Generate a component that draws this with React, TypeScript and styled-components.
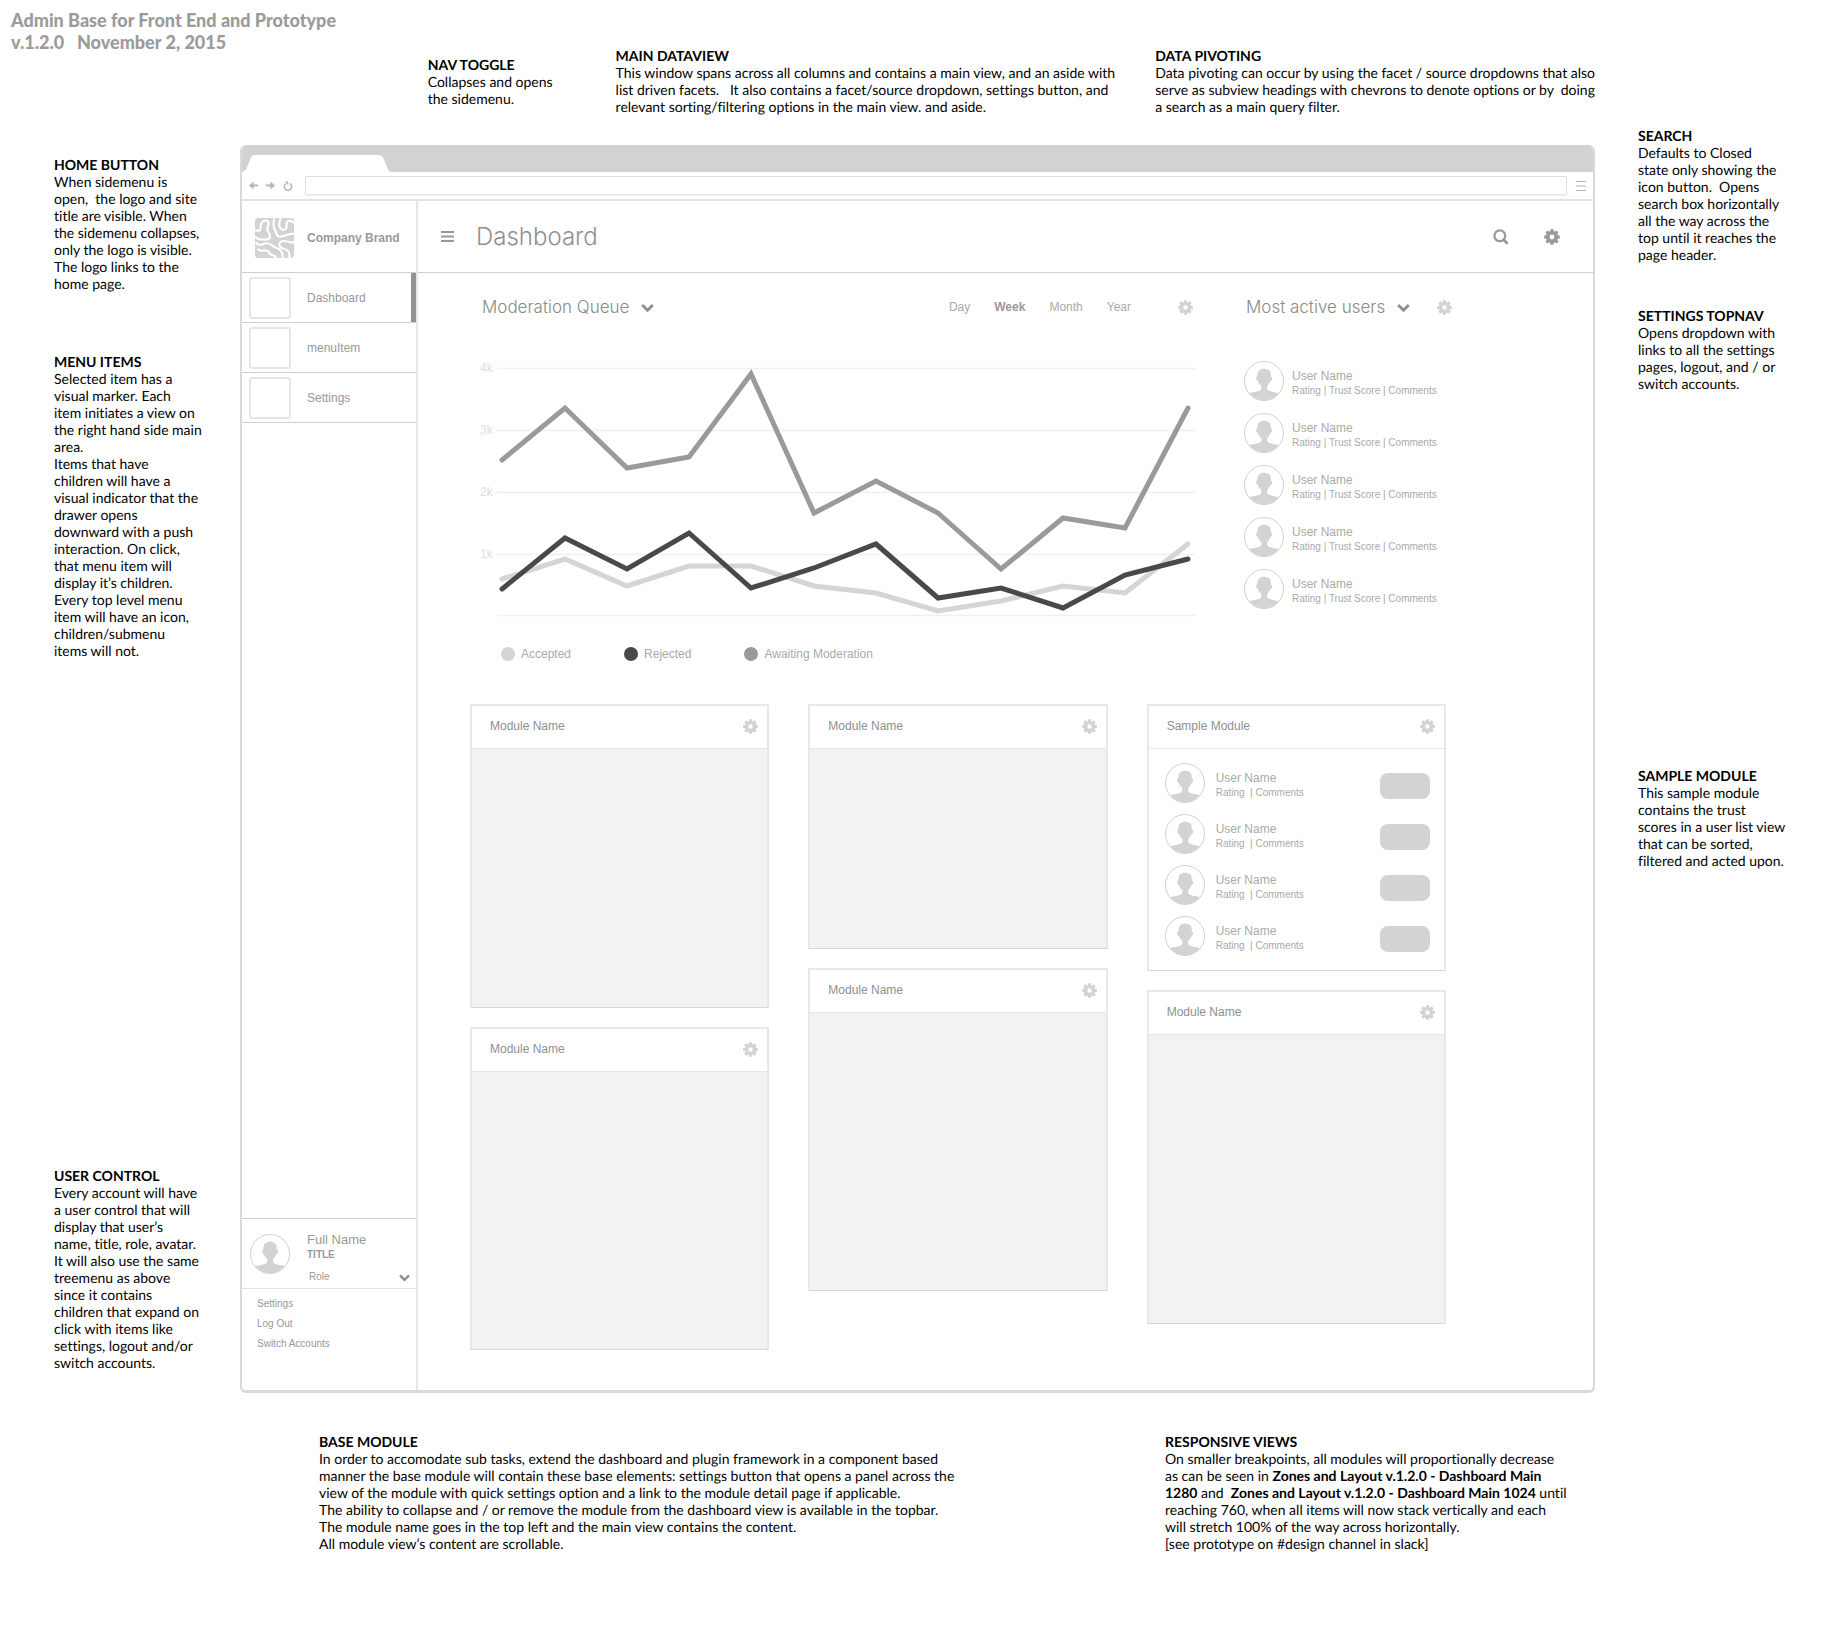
import React from "react";
import styled, { createGlobalStyle } from "styled-components";

const GlobalStyle = createGlobalStyle`
  *, *::before, *::after { box-sizing: border-box; }
  body {
    margin: 0;
    background: #fff;
    font-family: "Liberation Sans", Arial, sans-serif;
    font-size: 12px;
    color: #999;
  }
  h1, h2, h3, p, ul { margin: 0; padding: 0; }
  ul { list-style: none; }
  button, input { font: inherit; color: inherit; }
  svg { display: block; flex: none; }
`;

const Sheet = styled.div`
  display: grid;
  grid-template-columns: 240px minmax(0, 1fr) 229px;
  grid-template-rows: 145px auto auto;
`;

const TopNotes = styled.header`
  grid-column: 1 / 3;
  display: grid;
  grid-template-columns: 428fr 188fr 540fr 439fr;
`;

const SheetTitle = styled.h1`
  padding: 9px 0 0 11px;
  font: 900 18px/22px Lato, sans-serif;
  color: #9b9b9b;
  white-space: pre;
`;

const LeftRail = styled.aside`
  grid-column: 1;
  grid-row: 2;
  display: flex;
  flex-direction: column;
  gap: 60px;
  padding: 10px 0 22px 54px;

  > :last-child { margin-top: auto; }
`;

const RightRail = styled.aside`
  grid-column: 3;
  grid-row: 1 / 3;
  display: flex;
  flex-direction: column;
  gap: 43px;
  padding: 126px 0 0 43px;

  > :last-child { margin-top: 331px; }
`;

const BottomNotes = styled.footer`
  grid-column: 1 / 4;
  display: grid;
  grid-template-columns: 846fr 659fr;
  padding: 39px 0 74px 319px;
`;

const NoteBlock = styled.section<{ $top?: number }>`
  padding-top: ${(p) => p.$top ?? 0}px;
  font: 400 14px/17px Lato, sans-serif;
  font-variant-ligatures: none;
  text-rendering: geometricPrecision;
  color: #000;
  white-space: pre;
`;

const NoteTitle = styled.h2`
  padding-top: 1px;
  font: 700 14px/17px Lato, sans-serif;
`;

const Line = styled.span`
  display: block;
`;

const Note = ({ title, top, children }: { title: string; top?: number; children: React.ReactNode }) => (
  <NoteBlock $top={top}>
    <NoteTitle>{title}</NoteTitle>
    <p>{children}</p>
  </NoteBlock>
);

/* Browser window */

const Window = styled.div`
  grid-column: 2;
  grid-row: 2;
  display: flex;
  flex-direction: column;
  border: 2px solid #d8d9da;
  border-width: 0 2px 3px;
  border-radius: 6px;
  overflow: hidden;
`;

const TabStrip = styled.div`
  display: flex;
  align-items: flex-end;
  height: 27px;
  background: #d1d2d4;
`;

const AddressBar = styled.div`
  display: flex;
  align-items: center;
  height: 29px;
  padding: 0 4px 0 3px;
  border-bottom: 2px solid #e2e2e2;
`;

const ChromeButton = styled.button`
  display: grid;
  place-items: center;
  width: 17px;
  height: 20px;
  padding: 0;
  border: 0;
  background: none;
  color: #b4b5b7;
`;

const AddressInput = styled.input`
  flex: 1;
  min-width: 0;
  height: 20px;
  margin: 0 5px 0 9px;
  padding: 0 6px;
  border: 1px solid #dedede;
  border-bottom: 2px solid #ebebeb;
  border-radius: 2px;
  outline: 0;
`;

const Shell = styled.div`
  display: grid;
  grid-template-columns: 176px minmax(0, 1fr);
  flex: 1;
`;

const Sidebar = styled.nav`
  display: flex;
  flex-direction: column;
  border-right: 2px solid #e6e6e6;
`;

const Brand = styled.a`
  display: flex;
  align-items: center;
  gap: 13px;
  height: 72px;
  padding: 2px 0 0 13px;
  border-bottom: 1px solid #cfcfcf;
  font-weight: 700;
  color: #999;
  text-decoration: none;
  white-space: nowrap;
`;

const MenuLink = styled.a<{ $active?: boolean }>`
  display: flex;
  align-items: center;
  gap: 16px;
  height: 50px;
  padding-left: 7px;
  border-bottom: 1px solid #cfcfcf;
  box-shadow: ${(p) => (p.$active ? "inset -5px 0 0 #929497" : "none")};
  color: #999;
  text-decoration: none;
`;

const MenuIcon = styled.span`
  width: 42px;
  height: 42px;
  border: 2px solid #e6e6e6;
  border-radius: 3px;
`;

const UserControl = styled.div`
  margin-top: auto;
  height: 172px;
  border-top: 1px solid #cfcfcf;
`;

const Account = styled.div`
  display: flex;
  gap: 17px;
  height: 70px;
  padding: 15px 6px 0 8px;
  border-bottom: 1px solid #e0e0e0;
`;

const AccountText = styled.div`
  flex: 1;
`;

const AccountName = styled.div`
  margin-top: -2px;
  font-size: 13px;
  line-height: 15px;
`;

const AccountTitle = styled.div`
  font-size: 10px;
  font-weight: 700;
  line-height: 16px;
`;

const RoleButton = styled.button`
  display: flex;
  align-items: center;
  justify-content: space-between;
  width: 100%;
  padding: 6px 0 0 2px;
  border: 0;
  background: none;
  font-size: 10px;
  line-height: 16px;
`;

const AccountLinks = styled.ul`
  padding: 5px 0 0 15px;
`;

const AccountLink = styled.a`
  display: block;
  font-size: 10px;
  line-height: 20px;
  color: #999;
  text-decoration: none;
`;

const TopBar = styled.header`
  display: flex;
  align-items: center;
  gap: 20px;
  height: 72px;
  padding: 0 31px 0 21px;
  border-bottom: 1px solid #cfcfcf;
`;

const IconButton = styled.button`
  display: grid;
  place-items: center;
  padding: 2px;
  border: 0;
  background: none;
`;

const PageTitle = styled.h2`
  flex: 1;
  font: 300 24px/28px Inter, "Liberation Sans", sans-serif;
  color: #909090;
`;

const TopActions = styled.div`
  display: flex;
  gap: 31px;
  color: #999;
`;

const Content = styled.main`
  padding: 19px 147px 40px 52px;
`;

const Overview = styled.div`
  display: grid;
  grid-template-columns: minmax(0, 1fr) 210px;
  gap: 49px;
  margin-right: -8px;
  margin-bottom: 42px;
`;

const PanelHead = styled.div`
  display: flex;
  align-items: center;
  height: 30px;
  padding-left: 12px;
`;

const UsersHead = styled(PanelHead)`
  justify-content: space-between;
  padding-left: 2px;
`;

const SourceButton = styled.button`
  display: flex;
  align-items: center;
  gap: 12px;
  padding: 0;
  border: 0;
  background: none;
  font: 300 17px/22px Inter, "Liberation Sans", sans-serif;
  color: #8a8a8a;
  white-space: nowrap;
`;

const Ranges = styled.div`
  display: flex;
  gap: 24px;
  margin-left: auto;
  margin-right: 45px;
`;

const RangeButton = styled.button<{ $active?: boolean }>`
  padding: 0;
  border: 0;
  background: none;
  font-weight: ${(p) => (p.$active ? 700 : 400)};
  color: ${(p) => (p.$active ? "#999" : "#aaa")};
`;

const GearButton = styled(IconButton)`
  color: #d3d3d3;
`;

const ChartSvg = styled.svg`
  width: 100%;
  height: auto;
  margin-top: 38px;
`;

const AxisLabel = styled.text`
  font-size: 12px;
  fill: #dedede;
`;

const Legend = styled.ul`
  display: flex;
  gap: 53px;
  margin-top: 26px;
  padding-left: 31px;
`;

const LegendItem = styled.li<{ $color: string }>`
  display: flex;
  align-items: center;
  gap: 6px;
  line-height: 16px;
  color: #aaa;

  &::before {
    content: "";
    width: 14px;
    height: 14px;
    border-radius: 50%;
    background: ${(p) => p.$color};
  }
`;

const UserList = styled.ul<{ $gap: number }>`
  display: flex;
  flex-direction: column;
  gap: ${(p) => p.$gap}px;
`;

const ActiveUsers = styled(UserList)`
  margin-top: 39px;
`;

const UserRow = styled.li<{ $gap: number }>`
  display: flex;
  align-items: flex-start;
  gap: ${(p) => p.$gap}px;
  height: 40px;
`;

const UserText = styled.div`
  flex: 1;
  padding-top: 8px;
  color: #aaa;
  white-space: pre;
`;

const UserName = styled.div`
  line-height: 15px;
`;

const UserMeta = styled.div`
  font-size: 10px;
  line-height: 13px;
`;

const Pill = styled.button`
  width: 50px;
  height: 26px;
  margin-top: 10px;
  border: 0;
  border-radius: 8px;
  background: #d3d3d3;
`;

const Modules = styled.div`
  display: grid;
  grid-template-columns: repeat(3, minmax(0, 1fr));
  gap: 39px;
  align-items: start;
`;

const Column = styled.div`
  display: flex;
  flex-direction: column;
  gap: 19px;
`;

const ModuleBox = styled.section`
  border: 2px solid #e8e8e8;
  border-bottom: 1px solid #d6d6d6;
  border-radius: 1px;
`;

const ModuleHead = styled.header`
  display: flex;
  align-items: center;
  justify-content: space-between;
  height: 43px;
  padding: 0 7px 2px 18px;
  border-bottom: 1px solid #e6e6e6;
`;

const ModuleTitle = styled.h3`
  font-size: 12px;
  font-weight: 400;
  color: #8f8f8f;
`;

const ModuleBody = styled.div<{ $height: number }>`
  height: ${(p) => p.$height}px;
  background: #f2f2f2;
`;

const SampleBody = styled.div`
  padding: 14px 14px 14px 16px;
`;

/* Icons */

const Gear = ({ size = 15 }: { size?: number }) => (
  <svg width={size} height={size} viewBox="0 0 16 16" fill="currentColor" aria-hidden="true">
    <circle cx="8" cy="8" r="4.2" fill="none" stroke="currentColor" strokeWidth="3.6" />
    {[0, 45, 90, 135, 180, 225, 270, 315].map((a) => (
      <path key={a} d="M6.1 3.2L6.5 0.2H9.5L9.9 3.2Z" transform={`rotate(${a} 8 8)`} />
    ))}
  </svg>
);

const Chevron = ({ size = 13 }: { size?: number }) => (
  <svg width={size} height={size} viewBox="0 0 13 13" aria-hidden="true">
    <path d="M1.2 4L6.5 9.2L11.8 4" fill="none" stroke="#8e8e8e" strokeWidth="2.8" />
  </svg>
);

const Bars = ({ width, height, weight }: { width: number; height: number; weight: number }) => (
  <svg width={width} height={height} viewBox={`0 0 ${width} ${height}`} aria-hidden="true">
    <path
      d={`M0 ${weight / 2}H${width}M0 ${height / 2}H${width}M0 ${height - weight / 2}H${width}`}
      stroke="currentColor"
      strokeWidth={weight}
    />
  </svg>
);

const SearchIcon = () => (
  <svg width="16" height="16" viewBox="0 0 16 16" fill="none" stroke="currentColor" strokeWidth="2.3" aria-hidden="true">
    <circle cx="6.8" cy="6.8" r="5.4" />
    <path d="M10.8 10.8L14.6 14.8" strokeWidth="2.8" />
  </svg>
);

const Arrow = ({ flip }: { flip?: boolean }) => (
  <svg width="9" height="9" viewBox="0 0 9 9" aria-hidden="true">
    <g transform={flip ? "rotate(180 4.5 4.5)" : undefined}>
      <path d="M0 4.5L4.6 0.4V8.6Z" fill="currentColor" />
      <path d="M3 4.5H9" stroke="currentColor" strokeWidth="2.2" />
    </g>
  </svg>
);

const Reload = () => (
  <svg width="10" height="10" viewBox="0 0 10 10" fill="none" aria-hidden="true">
    <path d="M6.6 2.3A3.7 3.7 0 1 1 2.4 2.9" stroke="currentColor" strokeWidth="1.5" />
    <path d="M1.6 0.4H5.1V4Z" fill="currentColor" />
  </svg>
);

const Logo = () => (
  <svg width="39" height="40" viewBox="0 0 39 40" aria-hidden="true">
    <defs>
      <clipPath id="logo-clip">
        <rect width="39" height="40" rx="3" />
      </clipPath>
    </defs>
    <g clipPath="url(#logo-clip)" fill="none" stroke="#fff" strokeWidth="2.1">
      <rect width="39" height="40" fill="#d3d3d3" stroke="none" />
      <path d="M0 12C3.5 13.5 5 13 5.5 10C5.5 5 7.5 2.5 10.5 2.5C14 2.5 14.5 6 12.5 9.5C11 13 15.5 15 15 19C14.5 22.5 9 21.5 6 21.5C3 21.5 2 21 0 18.5" />
      <path d="M19.5 0C18 5 18 9 20 12C22 15 21 18 24 18.5C29 19.5 32 15 39 16" />
      <path d="M26 0C23.5 4 23.5 10 27 11.5C31 12.5 32 10 31.5 6.5C31.5 2.5 35 1.5 39 5" />
      <path d="M1 24C2 28 6 27 10 25.5C15 24 17 28 20.5 29.5C26 31.5 28 34 27.5 40" />
      <path d="M39 24C35 26 33 22.5 28.5 23C23 23.5 23 29 28 30.5C32 31.5 35 33 34.5 40" />
      <path d="M3 30.5C3.5 34 8 32.5 11 32.5C15 32.5 13 36 17 37C20 37.5 20.5 38.5 21 40" />
    </g>
  </svg>
);

const Avatar = () => (
  <svg width="40" height="40" viewBox="0 0 40 40" aria-hidden="true">
    <circle cx="20" cy="20" r="19.5" fill="#fff" stroke="#cfcfcf" />
    <path
      fill="#d3d3d3"
      d="M5.2 32.5C8 31 13 30.8 15.5 29.8C17.4 29 17.7 27 17 24.5C15.5 23.5 14.6 22 14.2 20.5C12.8 20.3 12 18 12.1 16.2C12.2 15.6 13 15.7 13.4 15.8C13 12 14.5 8.6 18 7.9C20 7.3 22 7.6 23 8.4C26 8.2 27.2 11.5 26.7 15.8C27.6 15.6 28.3 16 28.2 17C28 19 27.2 20.4 26 20.5C25.5 22.3 24.7 23.7 23.5 24.5C22.8 27 23.2 29 25 29.8C27.5 30.8 32 31 34.8 32.5A19.5 19.5 0 0 1 5.2 32.5Z"
    />
  </svg>
);

/* Data */

const xs = [32, 95, 157, 219, 281, 344, 406, 468, 531, 593, 655, 718];

const series = [
  { name: "Accepted", color: "#d5d5d5", ys: [219, 199, 226, 206, 206, 226, 233, 251, 241, 226, 233, 184] },
  { name: "Rejected", color: "#494949", ys: [229, 178, 209, 173, 228, 208, 184, 238, 228, 248, 215, 199] },
  { name: "Awaiting Moderation", color: "#9a9a9a", ys: [100, 48, 108, 97, 14, 153, 121, 153, 209, 158, 168, 48] },
];

const gridLines = [
  { y: 8.5, label: "4k" },
  { y: 70.5, label: "3k" },
  { y: 132.5, label: "2k" },
  { y: 194.5, label: "1k" },
  { y: 255.5, label: "" },
];

const Chart = () => (
  <ChartSvg viewBox="0 0 725 260" role="img" aria-label="Moderation queue">
    {gridLines.map((g) => (
      <g key={g.y}>
        <AxisLabel x="10" y={g.y + 3}>{g.label}</AxisLabel>
        <path d={`M27 ${g.y}H725`} stroke="#f0f0f0" strokeWidth="1.5" />
      </g>
    ))}
    {series.map((s) => (
      <polyline
        key={s.name}
        points={s.ys.map((y, i) => `${xs[i]},${y}`).join(" ")}
        fill="none"
        stroke={s.color}
        strokeWidth="5"
        strokeLinecap="round"
      />
    ))}
  </ChartSvg>
);

const Module = ({ title, height, children }: { title: string; height?: number; children?: React.ReactNode }) => (
  <ModuleBox>
    <ModuleHead>
      <ModuleTitle>{title}</ModuleTitle>
      <GearButton aria-label={`${title} settings`}><Gear /></GearButton>
    </ModuleHead>
    {children ?? <ModuleBody $height={height ?? 0} />}
  </ModuleBox>
);

const User = ({ meta, gap, action }: { meta: string; gap: number; action?: boolean }) => (
  <UserRow $gap={gap}>
    <Avatar />
    <UserText>
      <UserName>User Name</UserName>
      <UserMeta>{meta}</UserMeta>
    </UserText>
    {action && <Pill aria-label="Act on user" />}
  </UserRow>
);

export default function App() {
  return (
    <>
      <GlobalStyle />
      <Sheet>
        <TopNotes>
          <SheetTitle>{"Admin Base for Front End and Prototype\nv.1.2.0   November 2, 2015"}</SheetTitle>
          <Note title="NAV TOGGLE" top={55}>{"Collapses and opens\nthe sidemenu."}</Note>
          <Note title="MAIN DATAVIEW" top={46}>
            {"This window spans across all columns and contains a main view, and an aside with\nlist driven facets.   It also contains a facet/source dropdown, settings button, and\nrelevant sorting/filtering options in the main view. and aside."}
          </Note>
          <Note title="DATA PIVOTING" top={46}>
            {"Data pivoting can occur by using the facet / source dropdowns that also\nserve as subview headings with chevrons to denote options or by  doing\na search as a main query filter."}
          </Note>
        </TopNotes>

        <LeftRail>
          <Note title="HOME BUTTON">
            {"When sidemenu is\nopen,  the logo and site\ntitle are visible. When\nthe sidemenu collapses,\nonly the logo is visible.\nThe logo links to the\nhome page."}
          </Note>
          <Note title="MENU ITEMS">
            {"Selected item has a\nvisual marker. Each\nitem initiates a view on\nthe right hand side main\narea.\nItems that have\nchildren will have a\nvisual indicator that the\ndrawer opens\ndownward with a push\ninteraction. On click,\nthat menu item will\ndisplay it’s children.\nEvery top level menu\nitem will have an icon,\nchildren/submenu\nitems will not."}
          </Note>
          <Note title="USER CONTROL">
            {"Every account will have\na user control that will\ndisplay that user’s\nname, title, role, avatar.\nIt will also use the same\ntreemenu as above\nsince it contains\nchildren that expand on\nclick with items like\nsettings, logout and/or\nswitch accounts."}
          </Note>
        </LeftRail>

        <Window>
          <TabStrip>
            <svg width="150" height="17" viewBox="0 0 150 18" preserveAspectRatio="none" aria-hidden="true">
              <path d="M0 18C2.5 17.5 4 16 5 13L8.5 3.5C9.5 1 10.5 0 13 0H136.5C139 0 140.5 1 141.5 3.5L145 13C146 16 147 17.5 149.5 18Z" fill="#fff" />
            </svg>
          </TabStrip>
          <AddressBar>
            <ChromeButton aria-label="Back"><Arrow /></ChromeButton>
            <ChromeButton aria-label="Forward"><Arrow flip /></ChromeButton>
            <ChromeButton aria-label="Reload"><Reload /></ChromeButton>
            <AddressInput aria-label="Address" />
            <ChromeButton aria-label="Browser menu"><Bars width={10} height={10} weight={1} /></ChromeButton>
          </AddressBar>

          <Shell>
            <Sidebar>
              <Brand href="#"><Logo />Company Brand</Brand>
              <MenuLink href="#" $active><MenuIcon />Dashboard</MenuLink>
              <MenuLink href="#"><MenuIcon />menuItem</MenuLink>
              <MenuLink href="#"><MenuIcon />Settings</MenuLink>
              <UserControl>
                <Account>
                  <Avatar />
                  <AccountText>
                    <AccountName>Full Name</AccountName>
                    <AccountTitle>TITLE</AccountTitle>
                    <RoleButton>Role<Chevron size={11} /></RoleButton>
                  </AccountText>
                </Account>
                <AccountLinks>
                  {["Settings", "Log Out", "Switch Accounts"].map((label) => (
                    <li key={label}><AccountLink href="#">{label}</AccountLink></li>
                  ))}
                </AccountLinks>
              </UserControl>
            </Sidebar>

            <div>
              <TopBar>
                <IconButton aria-label="Toggle menu"><Bars width={13} height={11} weight={2} /></IconButton>
                <PageTitle>Dashboard</PageTitle>
                <TopActions>
                  <IconButton aria-label="Search"><SearchIcon /></IconButton>
                  <IconButton aria-label="Settings"><Gear size={16} /></IconButton>
                </TopActions>
              </TopBar>

              <Content>
                <Overview>
                  <section>
                    <PanelHead>
                      <SourceButton>Moderation Queue<Chevron /></SourceButton>
                      <Ranges>
                        <RangeButton>Day</RangeButton>
                        <RangeButton $active>Week</RangeButton>
                        <RangeButton>Month</RangeButton>
                        <RangeButton>Year</RangeButton>
                      </Ranges>
                      <GearButton aria-label="Queue settings"><Gear /></GearButton>
                    </PanelHead>
                    <Chart />
                    <Legend>
                      {series.map((s) => (
                        <LegendItem key={s.name} $color={s.color}>{s.name}</LegendItem>
                      ))}
                    </Legend>
                  </section>
                  <section>
                    <UsersHead>
                      <SourceButton>Most active users<Chevron /></SourceButton>
                      <GearButton aria-label="Active users settings"><Gear /></GearButton>
                    </UsersHead>
                    <ActiveUsers $gap={12}>
                      {[1, 2, 3, 4, 5].map((n) => (
                        <User key={n} gap={8} meta="Rating | Trust Score | Comments" />
                      ))}
                    </ActiveUsers>
                  </section>
                </Overview>

                <Modules>
                  <Column>
                    <Module title="Module Name" height={258} />
                    <Module title="Module Name" height={277} />
                  </Column>
                  <Column>
                    <Module title="Module Name" height={199} />
                    <Module title="Module Name" height={277} />
                  </Column>
                  <Column>
                    <Module title="Sample Module">
                      <SampleBody>
                        <UserList $gap={11}>
                          {[1, 2, 3, 4].map((n) => (
                            <User key={n} gap={11} meta="Rating  | Comments" action />
                          ))}
                        </UserList>
                      </SampleBody>
                    </Module>
                    <Module title="Module Name" height={288} />
                  </Column>
                </Modules>
              </Content>
            </div>
          </Shell>
        </Window>

        <RightRail>
          <Note title="SEARCH">
            {"Defaults to Closed\nstate only showing the\nicon button.  Opens\nsearch box horizontally\nall the way across the\ntop until it reaches the\npage header."}
          </Note>
          <Note title="SETTINGS TOPNAV">
            {"Opens dropdown with\nlinks to all the settings\npages, logout, and / or\nswitch accounts."}
          </Note>
          <Note title="SAMPLE MODULE">
            {"This sample module\ncontains the trust\nscores in a user list view\nthat can be sorted,\nfiltered and acted upon."}
          </Note>
        </RightRail>

        <BottomNotes>
          <Note title="BASE MODULE">
            {"In order to accomodate sub tasks, extend the dashboard and plugin framework in a component based\nmanner the base module will contain these base elements: settings button that opens a panel across the\nview of the module with quick settings option and a link to the module detail page if applicable.\nThe ability to collapse and / or remove the module from the dashboard view is available in the topbar.\nThe module name goes in the top left and the main view contains the content.\nAll module view’s content are scrollable."}
          </Note>
          <Note title="RESPONSIVE VIEWS">
            <Line>On smaller breakpoints, all modules will proportionally decrease</Line>
            <Line>as can be seen in <b>Zones and Layout v.1.2.0 - Dashboard Main</b></Line>
            <Line><b>1280</b>{" and  "}<b>Zones and Layout v.1.2.0 - Dashboard Main 1024</b> until</Line>
            <Line>reaching 760, when all items will now stack vertically and each</Line>
            <Line>will stretch 100% of the way across horizontally.</Line>
            <Line>[see prototype on #design channel in slack]</Line>
          </Note>
        </BottomNotes>
      </Sheet>
    </>
  );
}
